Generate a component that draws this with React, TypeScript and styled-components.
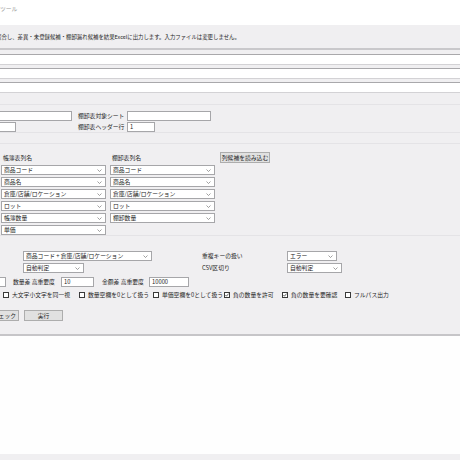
import React from "react";
import styled, { createGlobalStyle } from "styled-components";

const GlobalStyle = createGlobalStyle`
  html, body {
    margin: 0;
    padding: 0;
    background: #f0eff1;
    overflow: hidden;
  }
  body {
    font-family: "Noto Sans CJK JP", "Noto Sans", sans-serif;
    font-size: 5.8px;
    color: #262626;
  }
`;

const Window = styled.div`
  width: 460px;
  height: 460px;
  display: flex;
  flex-direction: column;
  background: #f0eff1;
  overflow: hidden;
`;

const TitleBar = styled.div`
  height: 25px;
  background: #ffffff;
  padding: 4px 0 0 0;
  box-sizing: border-box;
  color: #9a9a9a;
  white-space: nowrap;
`;

const Description = styled.div`
  height: 25px;
  box-sizing: border-box;
  display: flex;
  align-items: center;
  font-size: 5.4px;
  border-bottom: 2px solid #c9c8cb;
  white-space: nowrap;
  overflow: hidden;
`;

const DescText = styled.span`
  margin-left: -4px;
`;

const Section = styled.div<{ $pt: number; $mt?: number; $top?: boolean; $bottom?: boolean }>`
  padding-top: ${(p) => p.$pt}px;
  margin-top: ${(p) => p.$mt ?? 0}px;
  border-top: ${(p) => (p.$top ? "1px solid #e4e3e6" : "none")};
  border-bottom: ${(p) => (p.$bottom ? "1px solid #e4e3e6" : "none")};
  display: flex;
  flex-direction: column;
`;

const FileList = styled.div`
  display: flex;
  flex-direction: column;
  gap: 3px;
  padding-bottom: 11px;
`;

const FileBox = styled.div`
  height: 11px;
  box-sizing: border-box;
  background: #fff;
  border-top: 1px solid #a9a8ab;
  border-bottom: 1px solid #d3d2d5;
`;

const TextBox = styled.div<{ $w: number; $cut?: boolean }>`
  width: ${(p) => p.$w}px;
  height: 10px;
  box-sizing: border-box;
  background: #fff;
  border: 1px solid #a6a6a9;
  border-left: ${(p) => (p.$cut ? "none" : "1px solid #a6a6a9")};
  padding-left: 2px;
  display: flex;
  align-items: center;
  white-space: nowrap;
  line-height: 1;
`;

const SheetGrid = styled.div`
  display: grid;
  grid-template-columns: 72px 43px 84px;
  column-gap: 6px;
  row-gap: 1px;
  align-items: center;
`;

const Label = styled.span<{ $w?: number; $ml?: number }>`
  white-space: nowrap;
  line-height: 1;
  width: ${(p) => (p.$w ? `${p.$w}px` : "auto")};
  margin-left: ${(p) => p.$ml ?? 0}px;
`;

const ColumnGrid = styled.div`
  display: grid;
  grid-template-columns: 105px 105px auto;
  column-gap: 4px;
  row-gap: 2px;
  padding-left: 1px;
  align-items: center;
`;

const HeadLabel = styled(Label)`
  padding-left: 2px;
`;

const Button = styled.div<{ $w: number; $cut?: boolean }>`
  width: ${(p) => p.$w}px;
  height: 11px;
  box-sizing: border-box;
  background: #e1e1e1;
  border: 1px solid #adadad;
  border-left: ${(p) => (p.$cut ? "none" : "1px solid #adadad")};
  display: flex;
  align-items: center;
  justify-content: ${(p) => (p.$cut ? "flex-end" : "center")};
  padding-right: ${(p) => (p.$cut ? 2 : 0)}px;
  white-space: nowrap;
  line-height: 1;
  overflow: hidden;
`;

const LoadButton = styled(Button)`
  margin-left: 1px;
`;

const SelectBox = styled.div<{ $w: number }>`
  width: ${(p) => p.$w}px;
  height: 10px;
  box-sizing: border-box;
  background: #fff;
  border: 1px solid #a6a6a9;
  display: flex;
  align-items: center;
  justify-content: space-between;
  padding: 0 3px 0 2px;
  white-space: nowrap;
  line-height: 1;
`;

const OptionGrid = styled.div`
  display: grid;
  grid-template-columns: 129px 50px 85px auto;
  row-gap: 2px;
  padding-left: 23px;
  align-items: center;
`;

const ThresholdRow = styled.div`
  display: flex;
  align-items: center;
  margin-top: 4px;
`;

const CheckRow = styled.div`
  display: grid;
  grid-template-columns: 76px 74px 71px 58px 63px auto;
  padding-left: 3px;
  margin-top: 5px;
  align-items: center;
`;

const CheckItem = styled.label`
  display: flex;
  align-items: center;
  gap: 3px;
  white-space: nowrap;
  line-height: 1;
`;

const Box = styled.span`
  width: 6px;
  height: 6px;
  box-sizing: border-box;
  border: 1px solid #3a3a3a;
  background: #fff;
  display: inline-flex;
  align-items: center;
  justify-content: center;
`;

const ButtonRow = styled.div`
  display: flex;
  gap: 5px;
  margin-top: 12px;
`;

const LogArea = styled.div`
  margin-top: 13px;
  height: 118px;
  background: #fefefe;
  border-top: 2px solid #c6c5c8;
`;

const Chevron = () => (
  <svg width="5" height="3" viewBox="0 0 5 3">
    <polyline points="0.5,0.5 2.5,2.5 4.5,0.5" fill="none" stroke="#777" strokeWidth="0.7" />
  </svg>
);

const Select = ({ w, children }: { w: number; children: React.ReactNode }) => (
  <SelectBox $w={w}>
    <span>{children}</span>
    <Chevron />
  </SelectBox>
);

const Check = ({ checked, children }: { checked?: boolean; children: React.ReactNode }) => (
  <CheckItem>
    <Box>
      {checked && (
        <svg width="4" height="4" viewBox="0 0 4 4">
          <polyline points="0.4,2 1.5,3.2 3.6,0.6" fill="none" stroke="#222" strokeWidth="0.7" />
        </svg>
      )}
    </Box>
    {children}
  </CheckItem>
);

const bookCols = ["商品コード", "商品名", "倉庫/店舗/ロケーション", "ロット", "帳簿数量", "単価"];
const countCols = ["商品コード", "商品名", "倉庫/店舗/ロケーション", "ロット", "棚卸数量"];

export default function App() {
  return (
    <Window>
      <GlobalStyle />
      <TitleBar>ツール</TitleBar>
      <Description>
        <DescText>照合し、差異・未登録候補・棚卸漏れ候補を結果Excelに出力します。入力ファイルは変更しません。</DescText>
      </Description>

      <Section $pt={4} $bottom>
        <FileList>
          <FileBox />
          <FileBox />
          <FileBox />
        </FileList>
      </Section>

      <Section $pt={6} $bottom>
        <SheetGrid>
          <TextBox $w={72} $cut />
          <Label>棚卸表対象シート</Label>
          <TextBox $w={84} />
          <TextBox $w={16} $cut />
          <Label>棚卸表ヘッダー行</Label>
          <TextBox $w={28}>1</TextBox>
        </SheetGrid>
      </Section>

      <Section $pt={8} $mt={10} $top>
        <ColumnGrid>
          <HeadLabel>帳簿表列名</HeadLabel>
          <HeadLabel>棚卸表列名</HeadLabel>
          <LoadButton $w={50}>列候補を読み込む</LoadButton>
          {bookCols.map((b, i) => (
            <React.Fragment key={b}>
              <Select w={105}>{b}</Select>
              {countCols[i] ? <Select w={105}>{countCols[i]}</Select> : <span />}
              <span />
            </React.Fragment>
          ))}
        </ColumnGrid>
      </Section>

      <Section $pt={15} $top>
        <OptionGrid>
          <Select w={129}>商品コード + 倉庫/店舗/ロケーション</Select>
          <span />
          <Label>重複キーの扱い</Label>
          <Select w={50}>エラー</Select>
          <Select w={61}>自動判定</Select>
          <span />
          <Label>CSV区切り</Label>
          <Select w={55}>自動判定</Select>
        </OptionGrid>

        <ThresholdRow>
          <TextBox $w={6} $cut />
          <Label $ml={7} $w={48}>数量差 高重要度</Label>
          <TextBox $w={33}>10</TextBox>
          <Label $ml={8} $w={47}>金額差 高重要度</Label>
          <TextBox $w={40}>10000</TextBox>
        </ThresholdRow>

        <CheckRow>
          <Check>大文字小文字を同一視</Check>
          <Check>数量空欄を0として扱う</Check>
          <Check>単価空欄を0として扱う</Check>
          <Check checked>負の数量を許可</Check>
          <Check checked>負の数量を要確認</Check>
          <Check>フルパス出力</Check>
        </CheckRow>

        <ButtonRow>
          <Button $w={19} $cut>チェック</Button>
          <Button $w={39}>実行</Button>
        </ButtonRow>
      </Section>

      <LogArea />
    </Window>
  );
}
